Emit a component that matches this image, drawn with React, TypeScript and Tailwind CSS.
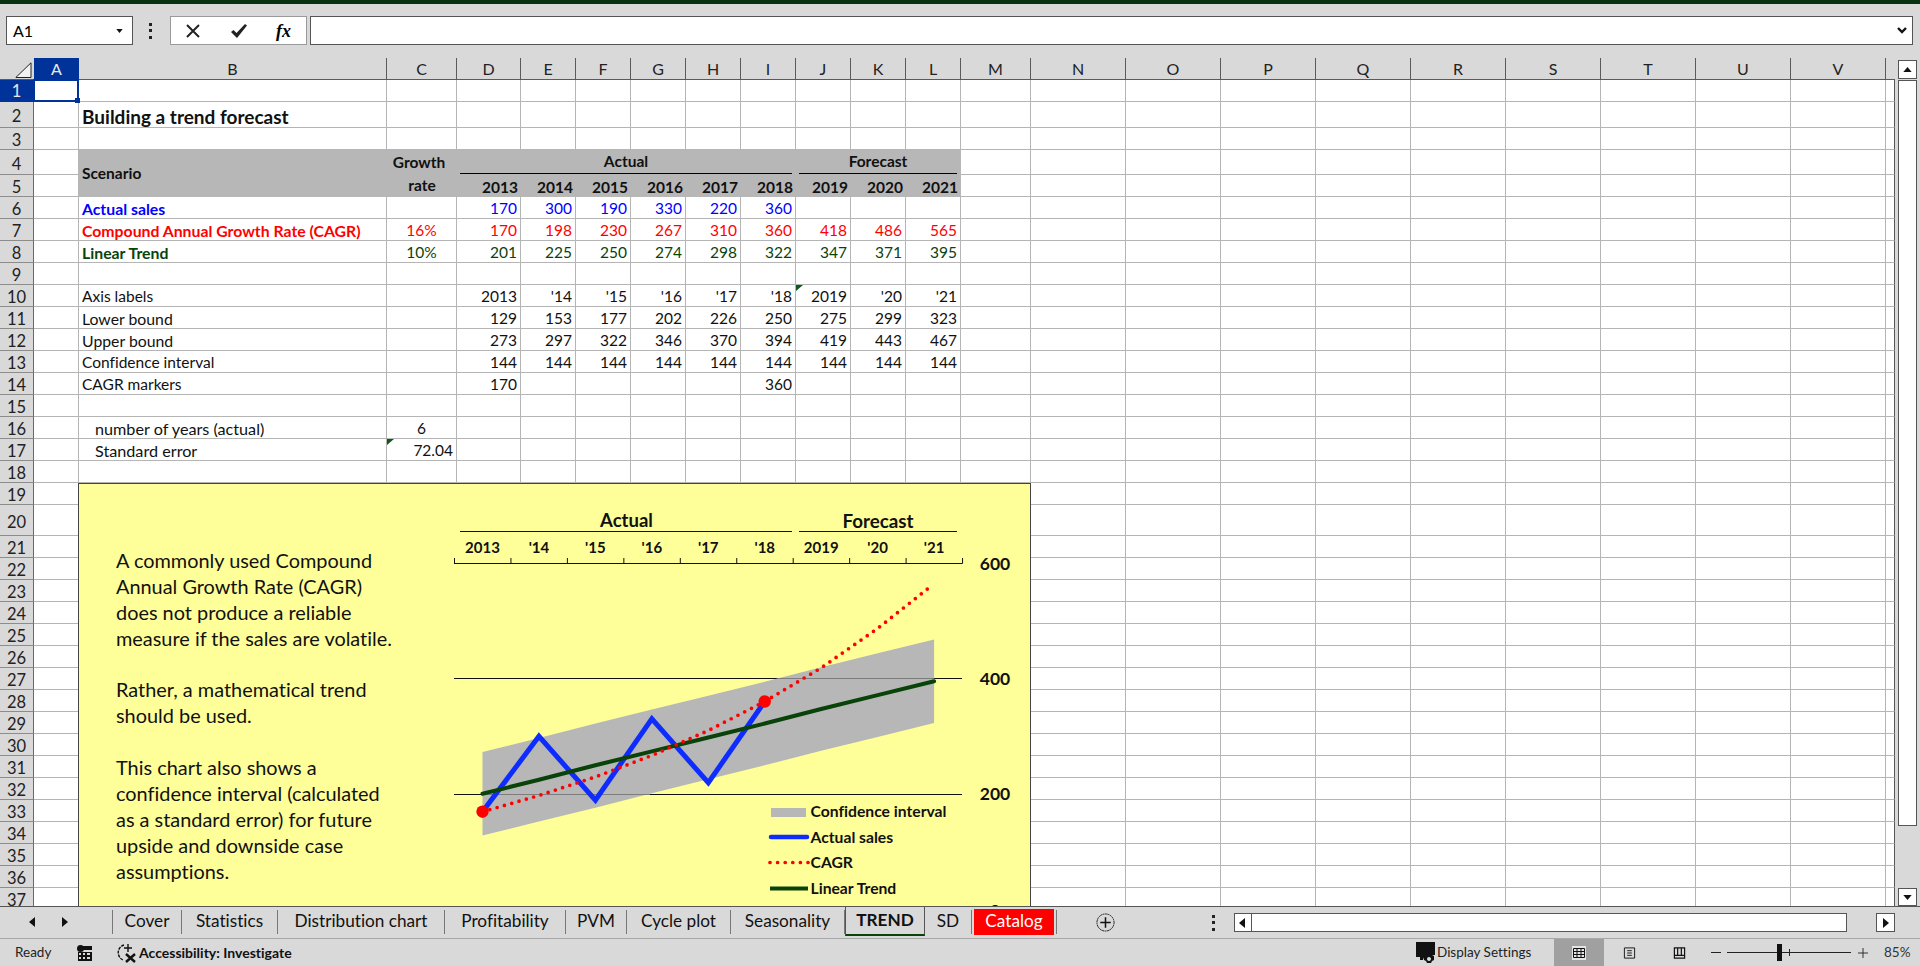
import React from "react"

const COLS = ["A", "B", "C", "D", "E", "F", "G", "H", "I", "J", "K", "L", "M", "N", "O", "P", "Q", "R", "S", "T", "U", "V", ""]
const ROWS = Array.from({ length: 37 }, (_, i) => i + 1)

type RowData = { label?: string; labelClass?: string; c?: string; cClass?: string; values?: string[]; valueClass?: string }

const DATA: Record<number, RowData> = {
  2: { label: "Building a trend forecast", labelClass: "font-bold text-[19px]" },
  6: { label: "Actual sales", labelClass: "font-bold text-[#0000ff] text-[15.8px]", values: ["170", "300", "190", "330", "220", "360"], valueClass: "text-[#0000ff]" },
  7: {
    label: "Compound Annual Growth Rate (CAGR)",
    labelClass: "font-bold text-[#ff0000] text-[15.8px]",
    c: "16%",
    cClass: "justify-center text-[#ff0000]",
    values: ["170", "198", "230", "267", "310", "360", "418", "486", "565"],
    valueClass: "text-[#ff0000]",
  },
  8: {
    label: "Linear Trend",
    labelClass: "font-bold text-[#0a430a] text-[15.8px]",
    c: "10%",
    cClass: "justify-center text-[#0a430a]",
    values: ["201", "225", "250", "274", "298", "322", "347", "371", "395"],
    valueClass: "text-[#0a430a]",
  },
  10: { label: "Axis labels", values: ["2013", "'14", "'15", "'16", "'17", "'18", "2019", "'20", "'21"] },
  11: { label: "Lower bound", labelClass: "text-[15.8px]", values: ["129", "153", "177", "202", "226", "250", "275", "299", "323"] },
  12: { label: "Upper bound", labelClass: "text-[15.8px]", values: ["273", "297", "322", "346", "370", "394", "419", "443", "467"] },
  13: { label: "Confidence interval", values: ["144", "144", "144", "144", "144", "144", "144", "144", "144"] },
  14: { label: "CAGR markers", values: ["170", "", "", "", "", "360"] },
  16: { label: "number of years (actual)", labelClass: "pl-[16px] text-[16.2px]", c: "6", cClass: "justify-center" },
  17: { label: "Standard error", labelClass: "pl-[16px] text-[16.2px]", c: "72.04", cClass: "justify-end pr-[3px]" },
}

const GRID_CELL = "relative flex items-center border-r border-b border-[#b5b5b5] pt-[3px] whitespace-nowrap leading-none"
const HEAD_FILL = "flex bg-[#b7b7b7] font-bold whitespace-nowrap leading-none"

const CommentMark = () => (
  <span className="absolute left-0 top-0 h-[6px] w-[7px] bg-[#0f5a1a] [clip-path:polygon(0_0,100%_0,0_100%)]" />
)

const RowHeader = ({ n }: { n: number }) => (
  <div
    className={
      n === 1
        ? "flex items-center justify-center border-r border-b border-[#003399] bg-[#003399] pt-[2px] text-[16.5px] text-[#e8e8e8]"
        : "flex items-center justify-center border-r border-b border-r-[#6a6a6a] border-b-[#8c8c8c] bg-[#d9d9d9] pt-[4px] text-[16.5px] text-[#222]"
    }
  >
    {n}
  </div>
)

const renderRow = (r: number) => {
  const row = DATA[r]
  const out: React.ReactNode[] = [<RowHeader key={`h${r}`} n={r} />]

  COLS.forEach((col, i) => {
    const key = `${col}${r}`
    if (r === 1 && col === "A") {
      out.push(
        <div key={key} className="relative z-10 -mt-px -ml-px border-2 border-[#003399] bg-white">
          <span className="absolute -bottom-[3px] -right-[3px] h-[5px] w-[5px] bg-[#003399]" />
        </div>,
      )
      return
    }
    if (r === 4 || r === 5) {
      if (col === "B") {
        if (r === 4)
          out.push(
            <div key={key} className={`${HEAD_FILL} row-span-2 items-center pl-[3px] pt-[1px]`}>
              Scenario
            </div>,
          )
        return
      }
      if (col === "C") {
        out.push(
          <div key={key} className={`${HEAD_FILL} items-center justify-center ${r === 4 ? "pr-[6px] pt-[1px]" : "pb-[1px]"}`}>
            {r === 4 ? "Growth" : "rate"}
          </div>,
        )
        return
      }
      if (r === 4 && col === "D") {
        out.push(
          <div key={key} className={`${HEAD_FILL} col-span-6 items-end pl-[3px] pr-[4px] pb-[1px]`}>
            <div className="w-full border-b border-black pb-[4px] text-center">Actual</div>
          </div>,
        )
        return
      }
      if (r === 4 && col === "J") {
        out.push(
          <div key={key} className={`${HEAD_FILL} col-span-3 items-end pl-[3px] pr-[4px] pb-[1px]`}>
            <div className="w-full border-b border-black pb-[4px] text-center">Forecast</div>
          </div>,
        )
        return
      }
      if (r === 4 && i > 2 && i < 12) return
      if (r === 5 && i > 2 && i < 12) {
        out.push(
          <div key={key} className={`${HEAD_FILL} items-center justify-end pr-[3px] pt-[3px]`}>
            {String(2013 + i - 3)}
          </div>,
        )
        return
      }
    }

    let text = ""
    let extra = ""
    if (row) {
      if (col === "B" && row.label) {
        text = row.label
        extra = row.labelClass ?? ""
        if (!extra.includes("pl-")) extra += " pl-[3px]"
      } else if (col === "C" && row.c) {
        text = row.c
        extra = row.cClass ?? ""
      } else if (i >= 3 && i < 12 && row.values?.[i - 3]) {
        text = row.values[i - 3]
        extra = `justify-end pr-[3px] ${row.valueClass ?? ""}`
      }
    }
    const isLast = col === ""
    out.push(
      <div key={key} className={`${GRID_CELL} ${extra} ${isLast ? "border-r-[#555]" : ""}`}>
        {(key === "J10" || key === "C17") && <CommentMark />}
        {text}
      </div>,
    )
  })
  return out
}

const bandTop = [273, 297, 322, 346, 370, 394, 419, 443, 467]
const bandBottom = [129, 153, 177, 202, 226, 250, 275, 299, 323]
const actual = [170, 300, 190, 330, 220, 360]
const cagr = [170, 198, 230, 267, 310, 360, 418, 486]
const trend = [201, 225, 250, 274, 298, 322, 347, 371, 395]
const xLabels = ["2013", "'14", "'15", "'16", "'17", "'18", "2019", "'20", "'21"]

const px = (i: number) => 482.5 + 56.45 * i
const py = (v: number) => 910.3 - v * 0.58
const pts = (vals: number[]) => vals.map((v, i) => `${px(i)},${py(v)}`).join(" ")

const Chart = () => (
  <svg className="absolute left-0 top-0 h-[422px] w-[951px]" viewBox="79 484 951 422" fill="none">
    <line x1="454" x2="962" y1="678.5" y2="678.5" stroke="#111" />
    <line x1="454" x2="962" y1="794.5" y2="794.5" stroke="#111" />
    <polygon
      points={`${pts(bandTop)} ${bandBottom.map((v, i) => `${px(i)},${py(v)}`).reverse().join(" ")}`}
      fill="#b7b7b7"
    />
    <line x1="778" x2="934" y1="678.5" y2="678.5" stroke="#7d7d7d" />
    <line x1="482.5" x2="650" y1="794.5" y2="794.5" stroke="#7d7d7d" />

    <polyline points={pts(actual)} stroke="#0f2cff" strokeWidth="5" strokeLinejoin="miter" />
    <polyline points={pts(trend)} stroke="#0a430a" strokeWidth="4" strokeLinecap="round" />
    <polyline points={`${pts(cagr)} 928,588.5`} stroke="#ff0000" strokeWidth="3.7" strokeLinecap="round" strokeDasharray="0 7.6" />
    <circle cx={px(0)} cy={py(170)} r="6.2" fill="#ff0000" />
    <circle cx={px(5)} cy={py(360)} r="6.2" fill="#ff0000" />

    <line x1="454" x2="962.5" y1="563.5" y2="563.5" stroke="#111" />
    {Array.from({ length: 10 }, (_, i) => (
      <line key={i} x1={454.5 + 56.45 * i} x2={454.5 + 56.45 * i} y1="558" y2="563.5" stroke="#111" />
    ))}
    <line x1="460" x2="792" y1="531.5" y2="531.5" stroke="#111" />
    <line x1="799" x2="957" y1="531.5" y2="531.5" stroke="#111" />

    <g fill="#111" fontWeight="700" textAnchor="middle" dominantBaseline="central">
      <text x="626.5" y="520" fontSize="18.5">Actual</text>
      <text x="878" y="520" fontSize="18.8">Forecast</text>
      {xLabels.map((t, i) => (
        <text key={t} x={px(i)} y="547" fontSize="15">{t}</text>
      ))}
      <text x="995" y="563" fontSize="17.5">600</text>
      <text x="995" y="678" fontSize="17.5">400</text>
      <text x="995" y="793.5" fontSize="17.5">200</text>
      <text x="995" y="910" fontSize="17.5">0</text>
    </g>

    <rect x="771" y="808" width="35" height="9" fill="#b7b7b7" />
    <line x1="771" x2="807" y1="837" y2="837" stroke="#0f2cff" strokeWidth="4.5" strokeLinecap="round" />
    <line x1="770" x2="808" y1="862.5" y2="862.5" stroke="#ff0000" strokeWidth="3.7" strokeLinecap="round" strokeDasharray="0 7.6" />
    <line x1="770" x2="808" y1="888.5" y2="888.5" stroke="#0a430a" strokeWidth="4" />
    <g fill="#111" fontWeight="700" fontSize="15.7" dominantBaseline="central">
      <text x="810.5" y="811">Confidence interval</text>
      <text x="810.5" y="836.5">Actual sales</text>
      <text x="810.5" y="861.5">CAGR</text>
      <text x="810.5" y="887.5">Linear Trend</text>
    </g>
  </svg>
)

const NOTE = [
  "A commonly used Compound",
  "Annual Growth Rate (CAGR)",
  "does not produce a reliable",
  "measure if the sales are volatile.",
  "",
  "Rather, a mathematical trend",
  "should be used.",
  "",
  "This chart also shows a",
  "confidence interval (calculated",
  "as a standard error) for future",
  "upside and downside case",
  "assumptions.",
]

const TABS = [
  { name: "Cover", w: "w-[70px] border-l" },
  { name: "Statistics", w: "w-[96px]" },
  { name: "Distribution chart", w: "w-[167px]" },
  { name: "Profitability", w: "w-[121px]" },
  { name: "PVM", w: "w-[61px]" },
  { name: "Cycle plot", w: "w-[104px]" },
  { name: "Seasonality", w: "w-[114px]" },
]

const Tri = ({ d, cls = "h-[10px] w-[8px]" }: { d: string; cls?: string }) => (
  <svg viewBox="0 0 8 10" className={cls}>
    <path d={d} fill="#111" />
  </svg>
)

export default function App() {
  return (
    <div className="flex h-[966px] w-[1920px] flex-col overflow-hidden bg-[#d9d9d9] font-[Lato,'Noto_Sans',sans-serif] text-[15.5px] text-black [font-variant-ligatures:none]">
      <div className="h-[4px] bg-[#063312]" />

      {/* formula bar */}
      <div className="flex h-[54px] items-start pt-[12px]">
        <div className="ml-[6px] flex h-[29px] w-[127px] items-center justify-between border border-[#555] bg-white pl-[6px] pr-[9px] text-[16px]">
          A1
          <svg viewBox="0 0 8 5" className="h-[4px] w-[7px]"><path d="M0 0h8L4 5z" fill="#111" /></svg>
        </div>
        <svg viewBox="0 0 4 16" className="ml-[16px] mt-[7px] h-[16px] w-[4px]" fill="#222">
          <rect width="3" height="3" /><rect y="6" width="3" height="3" /><rect y="13" width="3" height="3" />
        </svg>
        <div className="ml-[17px] flex h-[29px] w-[137px] items-center border border-[#9a9a9a] bg-white">
          <svg viewBox="0 0 14 14" className="ml-[15px] h-[14px] w-[14px]" stroke="#222" strokeWidth="2" fill="none">
            <path d="M1 1l12 12M13 1L1 13" />
          </svg>
          <svg viewBox="0 0 16 14" className="ml-[31px] h-[14px] w-[16px]" fill="#222">
            <path d="M0 8l2.5-2 3 3L14 0l2 1.5L6 14z" />
          </svg>
          <span className="ml-[29px] font-['Liberation_Serif',serif] text-[18px] font-bold italic leading-none">fx</span>
        </div>
        <div className="ml-[3px] flex h-[29px] w-[1603px] items-center justify-end border border-[#555] bg-white pr-[5px]">
          <svg viewBox="0 0 10 7" className="h-[7px] w-[10px]" fill="none" stroke="#111" strokeWidth="2.4">
            <path d="M1 1l4 4 4-4" />
          </svg>
        </div>
      </div>

      <div className="flex h-[848px]">
        <div className="relative h-[848px] w-[1895px] overflow-hidden">
          <div className="grid grid-cols-[34px_45px_308px_70px_64px_repeat(8,55px)_70px_repeat(9,95px)_9px] grid-rows-[22px_22px_26px_22px_25px_repeat(15,22px)_31px_repeat(17,22px)] bg-white text-[#111]">
            {/* column header */}
            <div className="relative border-r border-b border-b-[#5a5a5a] border-r-[#d9d9d9] bg-[#d9d9d9]">
              <svg viewBox="0 0 17 16" className="absolute left-[15px] top-[4px] h-[16px] w-[17px]">
                <path d="M16 0.8V15.5H0.8z" fill="#f2f2f2" stroke="#222" />
              </svg>
            </div>
            {COLS.map((c) => (
              <div
                key={c || "end"}
                className={
                  c === "A"
                    ? "flex items-center justify-center border-b border-[#003399] bg-[#003399] text-[16px] text-[#e8e8e8]"
                    : c === ""
                      ? "border-b border-b-[#5a5a5a] bg-[#d9d9d9]"
                      : "flex items-center justify-center border-r border-b border-[#5a5a5a] bg-[#d9d9d9] text-[16px] text-[#222]"
                }
              >
                {c}
              </div>
            ))}
            {ROWS.map((r) => renderRow(r))}
          </div>

          {/* text box and chart sit over the cells */}
          <div className="absolute left-[78px] top-[425px] h-[423px] w-[953px] overflow-hidden border-x border-t border-[#444] bg-[#ffff99]">
            <div className="pl-[37px] pt-[64px] text-[19.9px] leading-[25.9px] text-[#111]">
              {NOTE.map((line, i) => (
                <div key={i} className="h-[25.9px] whitespace-nowrap">{line}</div>
              ))}
            </div>
            <Chart />
          </div>
        </div>

        {/* vertical scrollbar */}
        <div className="flex w-[25px] flex-col pl-[3px] pt-[2px]">
          <div className="flex h-[19px] w-[19px] items-center justify-center border border-[#555] bg-white">
            <svg viewBox="0 0 10 6" className="h-[5px] w-[9px]"><path d="M5 0l5 6H0z" fill="#111" /></svg>
          </div>
          <div className="mt-[1px] h-[747px] w-[19px] border border-[#555] bg-white" />
          <div className="mt-[62px] flex h-[18px] w-[19px] items-center justify-center border border-[#555] bg-white">
            <svg viewBox="0 0 10 6" className="h-[5px] w-[9px]"><path d="M0 0h10L5 6z" fill="#111" /></svg>
          </div>
        </div>
      </div>

      {/* sheet tabs */}
      <div className="flex h-[32px] items-start border-t border-[#555] text-[17.2px] leading-none text-[#111]">
        <div className="flex h-[30px] w-[112px] items-center pl-[29px]">
          <Tri d="M6 0v10L0 5z" />
          <Tri cls="ml-[24px] h-[10px] w-[8px]" d="M1 0v10l6-5z" />
        </div>
        {TABS.map((t) => (
          <div key={t.name} className={`mt-[3px] flex h-[24px] items-center justify-center border-r border-[#777] pb-[3px] ${t.w}`}>
            {t.name}
          </div>
        ))}
        <div className="flex h-[29px] w-[80px] items-center justify-center border-x border-b-2 border-x-[#555] border-b-[#0a430a] pb-[2px] font-bold">
          TREND
        </div>
        <div className="mt-[3px] flex h-[24px] w-[47px] items-center justify-center border-r border-[#777] pb-[3px]">SD</div>
        <div className="mt-[2px] ml-[2px] flex h-[26px] w-[80px] items-center justify-center bg-[#ff0000] pb-[2px] text-white">Catalog</div>
        <div className="ml-[2px] mt-[3px] h-[24px] w-px bg-[#777]" />
        <svg viewBox="0 0 20 20" className="ml-[39px] mt-[6px] h-[19px] w-[19px]" fill="none" stroke="#111">
          <circle cx="10" cy="10" r="9" strokeDasharray="2 0.6" />
          <path d="M10 4.5v11M4.5 10h11" strokeWidth="1.6" />
        </svg>
        <svg viewBox="0 0 4 16" className="ml-[97px] mt-[8px] h-[16px] w-[4px]" fill="#222">
          <rect width="3" height="3" /><rect y="6" width="3" height="3" /><rect y="13" width="3" height="3" />
        </svg>
        <div className="ml-[18px] mt-[6px] flex h-[19px] w-[18px] items-center justify-center border border-[#555] bg-white">
          <Tri d="M6 0v10L0 5z" />
        </div>
        <div className="h-[19px] w-[595px] mt-[6px] border-y border-r border-[#555] bg-white" />
        <div className="ml-[29px] mt-[6px] flex h-[19px] w-[19px] items-center justify-center border border-[#555] bg-white">
          <Tri d="M1 0v10l6-5z" />
        </div>
      </div>

      {/* status bar */}
      <div className="flex h-[28px] items-center border-t border-[#a8a8a8] text-[13.5px] leading-none text-[#222]">
        <span className="ml-[15px] w-[62px]">Ready</span>
        <svg viewBox="0 0 15 16" className="h-[16px] w-[15px]" fill="#111">
          <circle cx="3.5" cy="3.5" r="3.5" />
          <rect x="6" y="1" width="9" height="4" />
          <path d="M1 7h14v9H1zm1 1v2h2V8zm4 0v2h2V8zm4 0v2h3V8zM2 12v2h2v-2zm4 0v2h2v-2zm4 0v2h3v-2z" fillRule="evenodd" />
        </svg>
        <svg viewBox="0 0 22 20" className="ml-[24px] h-[20px] w-[22px]" fill="none" stroke="#111">
          <path d="M8 2a8 8 0 0 0-1 15" strokeWidth="1.4" strokeDasharray="3 1" />
          <path d="M12 1v8M8 5h8" strokeWidth="1.4" />
          <path d="M10 11l9 8M19 11l-9 8" strokeWidth="2.4" />
        </svg>
        <span className="ml-[1px] text-[14px] font-bold text-[#111]">Accessibility: Investigate</span>

        <svg viewBox="0 0 20 22" className="ml-auto h-[22px] w-[20px]" fill="#111">
          <path d="M0 0h19v13h-5a6 6 0 0 0-7 5H4v-3H0z" />
          <path d="M11 11h4l1 2 2 1v4l-2 1-1 2h-4l-1-2-2-1v-4l2-1zm2 4a2 2 0 1 0 .01 0z" fillRule="evenodd" />
        </svg>
        <span className="w-[118px] pl-[1px]">Display Settings</span>
        <div className="flex h-full w-[50px] items-center justify-center bg-[#a0a0a0]">
          <svg viewBox="0 0 14 14" className="h-[14px] w-[14px] bg-[#e4e4e4]" fill="none" stroke="#111">
            <path d="M1.5 2.5h11v9h-11zM1.5 5.5h11M1.5 8.5h11M5 2.5v9M9 2.5v9" />
          </svg>
        </div>
        <div className="flex h-full w-[50px] items-center justify-center">
          <svg viewBox="0 0 14 14" className="h-[14px] w-[13px]" fill="none" stroke="#111">
            <path d="M1.5 1.5h11v11h-11zM4.5 4.5h5M4.5 7h5M4.5 9.5h5" />
          </svg>
        </div>
        <div className="flex h-full w-[50px] items-center justify-center">
          <svg viewBox="0 0 14 14" className="h-[14px] w-[13px]" fill="none" stroke="#111">
            <path d="M1.5 1.5h11v11h-11zM1.5 9.5h11M5 1.5v8M9 1.5v8" strokeWidth="1.3" />
          </svg>
        </div>
        <div className="ml-[7px] h-px w-[10px] bg-[#222]" />
        <div className="relative ml-[6px] h-px w-[124px] bg-[#222]">
          <span className="absolute left-[50px] -top-[8px] h-[17px] w-[5px] bg-[#111]" />
          <span className="absolute left-[62px] -top-[3px] h-[7px] w-px bg-[#222]" />
        </div>
        <svg viewBox="0 0 11 11" className="ml-[7px] h-[10px] w-[10px]" stroke="#222" fill="none"><path d="M5.5 0v11M0 5.5h11" /></svg>
        <span className="ml-[16px] mr-[11px] w-[25px] text-[#333]">85%</span>
      </div>
    </div>
  )
}
